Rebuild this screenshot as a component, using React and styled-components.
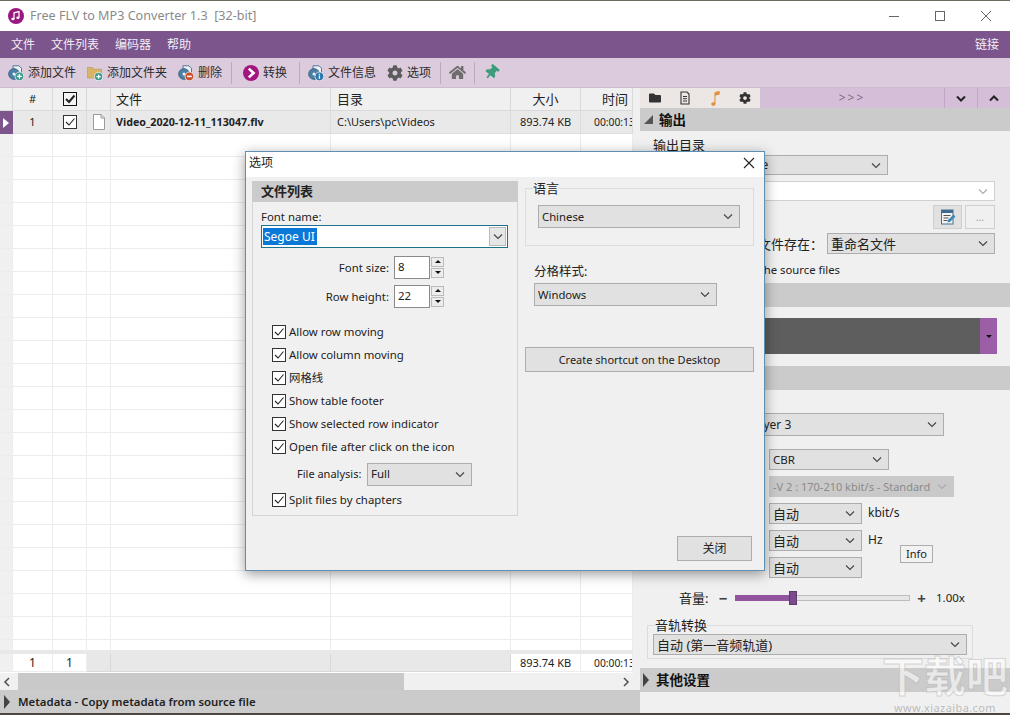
import React from 'react';
import styled, { createGlobalStyle } from 'styled-components';
import { FaCog, FaFolder, FaHome, FaThumbtack } from 'react-icons/fa';
import { IoMusicalNote } from 'react-icons/io5';

const FONT = '"Noto Sans", "Noto Sans CJK SC", sans-serif';
const COLS = '13px 40px 34px 24px 220px 180px 70px 52px';

const Global = createGlobalStyle`
  html, body { margin: 0; padding: 0; background: #fff; }
  #root { width: 1010px; height: 715px; overflow: hidden; }
  * { box-sizing: border-box; }
`;

const Win = styled.div`
  position: relative; width: 1010px; height: 715px; overflow: hidden;
  display: flex; flex-direction: column; background: #f0f0f0;
  font: 12px/16px ${FONT}; color: #222;
  border-top: 1px solid #6e6a5e; border-bottom: 2px solid #4c463e;
`;
const TitleBar = styled.div`
  height: 30px; flex: none; background: #fff; display: flex; align-items: center; padding: 0 1px 0 8px;
`;
const Logo = styled.svg`width: 16px; height: 16px; flex: none;`;
const TitleText = styled.div`margin-left: 6px; font-size: 12.6px; color: #8a8a8a; flex: 1;`;
const WinBtn = styled.svg`width: 46px; height: 12px; flex: none; stroke: #666; fill: none; stroke-width: 1;`;
const Menu = styled.div`
  height: 27px; flex: none; background: #7b558c; color: #f2edf4; display: flex; align-items: center; padding: 0 11px; gap: 16px;
`;
const MenuEnd = styled.span`margin-left: auto;`;
const Toolbar = styled.div`
  height: 30px; flex: none; background: #dccbdc; display: flex; align-items: center; padding-left: 8px;
  border-bottom: 1px solid #cdbccd;
`;
const Tool = styled.div`display: flex; align-items: center; gap: 4px; margin-left: ${p => p.$ml || 0}px; color: #2b2b2b;`;
const IconBox = styled.svg`width: 16px; height: 16px; flex: none;`;
const Sep = styled.div`width: 1px; height: 22px; background: #bcaabc; margin-left: ${p => p.$ml}px;`;
const GearTool = styled(FaCog)`width: 16px; height: 16px; color: #5c5c5c;`;
const HomeTool = styled(FaHome)`width: 17px; height: 17px; color: #6d6d6d; margin-left: 8px;`;
const PinTool = styled(FaThumbtack)`width: 15px; height: 15px; color: #3d9c7b; margin-left: 9px; transform: rotate(40deg);`;

const Main = styled.div`flex: 1; min-height: 0; display: flex;`;
const Left = styled.div`width: 640px; flex: none; display: flex; flex-direction: column; padding-right: 2px;`;
const Table = styled.div`flex: 1; min-height: 0; display: flex; flex-direction: column; padding-right: 5px; background: #f0f0f0;`;
const Row = styled.div`display: grid; grid-template-columns: ${COLS}; flex: none; height: ${p => p.$h}px;`;
const HeadRow = styled(Row)`margin-right: -5px; background: #f0f0f0;`;
const HCell = styled.div`
  background: #f0f0f0; border-right: 1px solid #d9d9d9; border-bottom: 1px solid #d9d9d9;
  display: flex; align-items: center; justify-content: ${p => p.$j || 'center'};
  padding-left: ${p => p.$pl || 0}px; padding-right: ${p => p.$pr || 0}px; font-size: ${p => p.$fs || 13}px;
`;
const Cell = styled.div`
  background: ${p => p.$bg || '#fff'}; border-right: 1px solid ${p => p.$line || '#ececec'}; border-bottom: 1px solid ${p => p.$line || '#ececec'};
  display: flex; align-items: center; overflow: hidden; white-space: nowrap; justify-content: ${p => p.$j || 'flex-start'};
  padding-left: ${p => p.$pl || 0}px; font-weight: ${p => p.$bold ? 700 : 400}; font-size: ${p => p.$fs || 11}px;
`;
const Indicator = styled.div`
  background: #7b558c; display: flex; align-items: center; padding-left: 3px;
`;
const Tri = styled.i`
  display: block; width: 0; height: 0; border-left: 6px solid ${p => p.$c || '#fff'};
  border-top: ${p => p.$s || 5}px solid transparent; border-bottom: ${p => p.$s || 5}px solid transparent;
`;
const Body = styled.div`flex: 1; min-height: 0; overflow: hidden;`;
const FootWrap = styled.div`flex: none; border-top: 4px solid #e8e8e8; border-bottom: 1px solid #fff;`;
const HScroll = styled.div`height: 17px; flex: none; display: flex; align-items: center; background: #f0f0f0; margin-right: 5px; color: #555;`;
const Thumb = styled.div`width: 386px; height: 17px; background: #c9c9c9; margin-left: 3px;`;
const Arrow = styled.svg`width: 15px; height: 10px; flex: none; margin-left: ${p => p.$auto ? 'auto' : '0'}; stroke: #555; fill: none; stroke-width: 1.6;`;
const MetaBar = styled.div`
  height: 23px; flex: none; background: #cbcbcb; margin-right: -2px; display: flex; align-items: center; gap: 8px; padding-left: 4px;
  font-weight: 600; font-size: 11.4px; color: #222;
`;

const Panel = styled.div`flex: 1; min-width: 0; display: flex; flex-direction: column; background: #f0f0f0; position: relative;`;
const Tabs = styled.div`height: 20px; flex: none; display: flex; background: #d5bfd8; align-items: stretch;`;
const TabSet = styled.div`width: 120px; background: #ece7e5; display: flex; align-items: center;`;
const Tab = styled.div`width: 30px; display: flex; align-items: center; justify-content: center; color: ${p => p.$c || '#333'};`;
const More = styled.div`flex: 1; text-align: center; color: #7a6a80; letter-spacing: 2px; font-size: 12px; line-height: 20px;`;
const TabBtn = styled.div`width: 33px; border-left: 1px solid #bfa9c3; display: flex; align-items: center; justify-content: center;`;
const Chevron = styled.svg`width: 10px; height: 7px; flex: none; stroke: ${p => p.$c || '#222'}; stroke-width: ${p => p.$w || 2}; fill: none;`;
const Section = styled.div`
  height: ${p => p.$h || 24}px; flex: none; background: #cbcbcb; display: flex; align-items: center; gap: 6px; padding-left: 4px;
  font-size: 13.5px; font-weight: 700; color: #111;
`;
const Corner = styled.i`display: block; width: 0; height: 0; border-bottom: 9px solid #555; border-left: 9px solid transparent;`;
const OutBody = styled.div`height: 152px; flex: none; padding: 6px 15px 0 13px; font-size: 12px;`;
const OutLabel = styled.div`font-size: 13px; line-height: 17px; height: 18px; color: #222;`;
const Sel = styled.div`
  height: ${p => p.$h || 22}px; width: ${p => p.$w ? p.$w + 'px' : 'auto'}; flex: ${p => p.$w ? 'none' : '1'};
  background: ${p => p.$off ? '#c9c9c9' : '#e1e1e1'}; border: 1px solid ${p => p.$off ? '#c9c9c9' : '#adadad'};
  color: ${p => p.$off ? '#8b8b8b' : '#222'}; display: flex; align-items: center; justify-content: space-between;
  padding: 0 6px 0 ${p => p.$pl || 3}px; white-space: nowrap; overflow: hidden; font-size: ${p => p.$fs || 11.5}px;
`;
const Combo = styled(Sel)`background: #fff; border-color: #d0d0d0; margin-top: 6px;`;
const BtnRow = styled.div`display: flex; justify-content: flex-end; gap: 3px; margin-top: 4px;`;
const IconBtn = styled.div`
  width: ${p => p.$w}px; height: 24px; background: ${p => p.$on ? '#e1e1e1' : '#f0f0f0'}; border: 1px solid #cfcfcf;
  display: flex; align-items: center; justify-content: center; color: #999; font-size: 10px;
`;
const ExistRow = styled.div`display: flex; align-items: center; justify-content: flex-end; gap: 4px; margin-top: 4px; font-size: 13px;`;
const Note = styled.div`width: 187px; text-align: right; margin-top: 8px; white-space: nowrap; font-size: 11.3px;`;
const Bar = styled.div`height: 36px; margin: 11px 13px 12px 0; flex: none; background: #5e5e5e; display: flex; justify-content: flex-end;`;
const BarBtn = styled.div`width: 17px; background: #9c5ea6; display: flex; align-items: center; justify-content: center;`;
const Caret = styled.i`display: block; width: 0; height: 0; border-top: 3px solid #111; border-left: 3px solid transparent; border-right: 3px solid transparent;`;
const Audio = styled.div`flex: 1; min-height: 0; padding: 23px 0 0; display: flex; flex-direction: column;`;
const CodecSel = styled(Sel)`margin-left: 13px;`;
const Stack = styled.div`margin: 13px 0 0 129px; display: flex; flex-direction: column; gap: 6px;`;
const Form = styled.div`
  display: grid; grid-template-columns: 129px 93px 38px auto; column-gap: 0; row-gap: 6px; grid-auto-rows: 21px; margin-top: 6px; justify-content: start;
`;
const FormLabel = styled.div`padding-right: 4px; text-align: right; line-height: 18px;`;
const Unit = styled.div`padding-left: 6px; line-height: 20px;`;
const Info = styled.div`
  grid-column: 4; grid-row: 2 / span 2; align-self: center; margin-top: -1px; width: 33px; height: 18px; background: #f2f2f2; border: 1px solid #adadad;
  display: flex; align-items: center; justify-content: center; font-size: 11px;
`;
const Spacer = styled.div``;
const Volume = styled.div`display: flex; align-items: center; height: 16px; margin: 12px 0 0 39px; font-size: 12px;`;
const VolLabel = styled.span`width: 38px; font-size: 13px;`;
const VolSign = styled.span`width: ${p => p.$w}px; font-size: 15px; font-weight: 700; color: #444; text-align: center;`;
const Track = styled.div`position: relative; width: 175px; height: 6px; background: #e6e6e6; border: 1px solid #bdbdbd; margin-left: 6px;`;
const Fill = styled.div`height: 100%; background: #92549f; margin: -1px 0 0 -1px; box-sizing: content-box; border: 1px solid #92549f;`;
const Knob = styled.div`position: absolute; top: -5px; left: 53px; width: 8px; height: 14px; background: #7d4a8e; border: 1px solid #5c3a6a;`;
const VolValue = styled.span`margin-left: 3px; font-size: 11.5px;`;
const TrackGroup = styled.div`
  margin: 19px 0 0 7px; padding: 8px 5px 0; width: 326px; height: 34px; border: 1px solid #dcdcdc; display: flex; position: relative;
`;
const GroupLegend = styled.span`
  position: absolute; top: -9px; left: ${p => p.$left}px; background: #f0f0f0; font-size: 13px; line-height: 16px; color: #222;
`;
const OtherSection = styled(Section)`margin-top: 9px; padding-left: 3px; gap: 7px;`;
const Watermark = styled.div`
  position: absolute; right: -3px; bottom: -1px; width: 136px; text-align: center; color: rgba(255,255,255,.6); pointer-events: none;
  font-weight: 700; font-size: 42px; line-height: 52px; -webkit-text-stroke: 1px rgba(170,170,170,.45);
`;
const WaterUrl = styled.div`font-size: 11px; line-height: 12px; font-weight: 400; -webkit-text-stroke: 0; color: rgba(150,150,150,.6); letter-spacing: .4px;`;

const Dialog = styled.div`
  position: absolute; left: 245px; top: 150px; width: 520px; height: 420px; background: #f0f0f0; border: 1px solid #5f8fb2;
  box-shadow: 0 3px 12px rgba(0,0,0,.4); display: flex; flex-direction: column; z-index: 5; font-size: 11.4px;
`;
const DlgTitle = styled.div`height: 25px; flex: none; background: #fff; display: flex; align-items: center; justify-content: space-between; padding: 0 9px 4px 3px; font-size: 12px;`;
const DlgX = styled.svg`width: 12px; height: 12px; stroke: #222; stroke-width: 1.1; fill: none;`;
const DlgBody = styled.div`flex: 1; min-height: 0; display: flex; padding: 4px 10px 0 6px; gap: 7px;`;
const ListGroup = styled.div`width: 266px; height: 335px; flex: none; border: 1px solid #d5d5d5; border-top: none;`;
const ListHead = styled.div`height: 21px; background: #cbcbcb; font-weight: 700; font-size: 13px; line-height: 21px; padding-left: 9px; margin: 0 -1px; color: #222;`;
const FontLabel = styled.div`margin: 7px 0 0 8px; line-height: 15px;`;
const FontCombo = styled.div`
  margin: 1px 9px 0 8px; height: 23px; background: #fff; border: 1px solid #1f6f8f; display: flex; align-items: center; justify-content: space-between; padding: 0 1px;
`;
const Picked = styled.span`background: #0a78d7; color: #fff; line-height: 17px; padding: 0 2px 0 1px; font-size: 12px;`;
const DropBtn = styled.div`width: 17px; height: 19px; background: #e6e6e6; border: 1px solid #bbb; display: flex; align-items: center; justify-content: center;`;
const NumRow = styled.div`display: flex; align-items: center; height: 23px; margin-top: ${p => p.$mt}px; justify-content: flex-end; padding-right: 82px; gap: 5px;`;
const NumInput = styled.div`width: 36px; height: 23px; background: #fff; border: 1px solid #8a8a8a; padding-left: 3px; line-height: 19px;`;
const Spin = styled.div`position: relative; width: 0;`;
const SpinBox = styled.div`position: absolute; left: -4px; top: -11px; width: 13px; display: flex; flex-direction: column; gap: 1px;`;
const SpinPart = styled.div`height: 10px; background: #ececec; border: 1px solid #bbb; display: flex; align-items: center; justify-content: center;`;
const SpinTri = styled.i`
  display: block; width: 0; height: 0; border-left: 3px solid transparent; border-right: 3px solid transparent;
  ${p => p.$up ? 'border-bottom: 3px solid #111;' : 'border-top: 3px solid #111;'}
`;
const Checks = styled.div`margin: 12px 0 0 19px; display: flex; flex-direction: column;`;
const CheckRow = styled.div`display: flex; align-items: center; height: 23px; gap: 3px; white-space: nowrap;`;
const Box = styled.svg`width: 14px; height: 14px; flex: none;`;
const AnalysisRow = styled.div`display: flex; align-items: center; height: 22px; margin: 5px 0 3px 25px; gap: 5px;`;
const AnalysisLabel = styled.span`width: 65px; white-space: nowrap; font-size: 11px;`;
const RightCol = styled.div`flex: 1; min-width: 0; position: relative; display: flex; flex-direction: column;`;
const LangGroup = styled.div`
  margin-top: 7px; padding: 16px 12px 0; height: 58px; border: 1px solid #dcdcdc; width: 229px; position: relative;
`;
const SepLabel = styled.div`margin: 18px 0 0 9px; font-size: 12.5px; line-height: 16px;`;
const SepSel = styled(Sel)`margin: 3px 0 0 9px; height: 23px;`;
const WideBtn = styled.div`
  margin-top: 41px; width: 229px; height: 25px; background: #e1e1e1; border: 1px solid #adadad; display: flex; align-items: center; justify-content: center; font-size: 11px;
`;
const CloseBtn = styled.div`
  margin: 164px 2px 0 auto; width: 75px; height: 25px; background: #e1e1e1; border: 1px solid #adadad; display: flex; align-items: center; justify-content: center; font-size: 12px;
`;

const Chev = ({ c = '#444' }) => (
  <Chevron $c={c} $w={1.1} viewBox="0 0 10 7"><path d="M1 1.5 L5 5.5 L9 1.5" /></Chevron>
);
const Check = ({ strong }) => (
  <Box viewBox="0 0 14 14">
    <rect x=".5" y=".5" width="13" height="13" fill={strong ? '#f4f4f4' : '#fff'} stroke={strong ? '#111' : '#333'} />
    <path d="M3 7 L6 10 L11.5 3.5" fill="none" stroke="#222" strokeWidth={strong ? 2 : 1.1} />
  </Box>
);
const DiscIcon = ({ badge }) => (
  <IconBox viewBox="0 0 16 16">
    <path d="M5 .8h6l2.5 2.5V8H5z" fill="#eef2f5" stroke="#3f6b8c" strokeWidth=".9" />
    <circle cx="6" cy="9" r="5.4" fill="#4a7fa6" stroke="#2f5674" strokeWidth=".7" />
    <circle cx="6" cy="9" r="1.5" fill="#eef2f5" />
    {badge === 'add' && <><circle cx="11.4" cy="11.4" r="4.4" fill="#3f9a8e" stroke="#fff" strokeWidth=".7" /><path d="M9 11.4h4.8M11.4 9v4.8" stroke="#fff" strokeWidth="1.3" /></>}
    {badge === 'del' && <><circle cx="11.4" cy="11.4" r="4.4" fill="#c9512f" stroke="#fff" strokeWidth=".7" /><path d="M9 11.4h4.8" stroke="#fff" strokeWidth="1.5" /></>}
    {badge === 'info' && <><circle cx="11.4" cy="11.4" r="4.4" fill="#2f78ae" stroke="#fff" strokeWidth=".7" /><path d="M11.4 10.5v3.2M11.4 8.8v1" stroke="#fff" strokeWidth="1.3" /></>}
  </IconBox>
);
const FolderAdd = () => (
  <IconBox viewBox="0 0 16 16">
    <path d="M0 2.5h5.5L7 4.2h7.5V13H0z" fill="#d9b467" stroke="#b08d45" strokeWidth=".5" />
    <circle cx="11.6" cy="11.6" r="4.1" fill="#3f9a8e" stroke="#fff" strokeWidth=".7" />
    <path d="M9.4 11.6h4.4M11.6 9.4v4.4" stroke="#fff" strokeWidth="1.2" />
  </IconBox>
);
const ConvertIcon = () => (
  <IconBox viewBox="0 0 16 16">
    <circle cx="8" cy="8" r="8" fill="#a3167f" />
    <path d="M5.8 3.6 L10.6 8 L5.8 12.4" fill="none" stroke="#fff" strokeWidth="2.6" />
  </IconBox>
);
const FileGlyph = () => (
  <IconBox viewBox="0 0 16 16">
    <path d="M2.5.5h7.5l3.5 3.5v11.5h-11z" fill="#fff" stroke="#9a9a9a" />
    <path d="M10 .5v3.5h3.5" fill="none" stroke="#9a9a9a" />
  </IconBox>
);
const NoteGlyph = () => (
  <IconBox viewBox="0 0 16 16">
    <path d="M4 2h6l2 2v10H4z" fill="none" stroke="#333" strokeWidth="1.1" />
    <path d="M6 6.5h4M6 8.7h4M6 11h4" stroke="#333" />
  </IconBox>
);
const EditGlyph = () => (
  <IconBox viewBox="0 0 16 16">
    <rect x="1.5" y="1" width="11.5" height="14" fill="#f4f4f4" stroke="#47708f" />
    <rect x="1.5" y="1" width="11.5" height="3" fill="#3d6c93" />
    <path d="M3.5 6.5h7M3.5 9h5M3.5 11.5h4" stroke="#555" />
    <path d="M7.5 13.5 L8 11 L13.5 5.5 L15.5 7.5 L10 13z" fill="#3f87b5" />
  </IconBox>
);

const checks1 = ['Allow row moving', 'Allow column moving', '网格线', 'Show table footer', 'Show selected row indicator', 'Open file after click on the icon'];
const emptyRows = Array.from({ length: 23 }, (_, i) => i);
const colKeys = ['a', 'b', 'c', 'd', 'e', 'f', 'g', 'h'];

export default function App() {
  return (
    <Win>
      <Global />
      <TitleBar>
        <Logo viewBox="0 0 16 16">
          <circle cx="8" cy="8" r="8" fill="#98197f" />
          <path d="M6 11V4.8l5-1.2v6" fill="none" stroke="#fff" strokeWidth="1.2" />
          <ellipse cx="4.9" cy="11" rx="1.6" ry="1.2" fill="#fff" />
          <ellipse cx="9.9" cy="9.8" rx="1.6" ry="1.2" fill="#fff" />
        </Logo>
        <TitleText>Free FLV to MP3 Converter 1.3&nbsp; [32-bit]</TitleText>
        <WinBtn viewBox="0 0 46 12"><path d="M18 6.5h10" /></WinBtn>
        <WinBtn viewBox="0 0 46 12"><rect x="18.5" y="1.5" width="9" height="9" /></WinBtn>
        <WinBtn viewBox="0 0 46 12"><path d="M18 1 L28 11 M28 1 L18 11" /></WinBtn>
      </TitleBar>
      <Menu>
        <span>文件</span><span>文件列表</span><span>编码器</span><span>帮助</span>
        <MenuEnd>链接</MenuEnd>
      </Menu>
      <Toolbar>
        <Tool><DiscIcon badge="add" />添加文件</Tool>
        <Tool $ml={11}><FolderAdd />添加文件夹</Tool>
        <Tool $ml={11}><DiscIcon badge="del" />删除</Tool>
        <Sep $ml={9} />
        <Tool $ml={11}><ConvertIcon />转换</Tool>
        <Sep $ml={12} />
        <Tool $ml={8}><DiscIcon badge="info" />文件信息</Tool>
        <Tool $ml={11}><GearTool />选项</Tool>
        <Sep $ml={9} />
        <HomeTool />
        <Sep $ml={8} />
        <PinTool />
      </Toolbar>
      <Main>
        <Left>
          <Table>
            <HeadRow $h={23}>
              <HCell />
              <HCell $fs={11}>#</HCell>
              <HCell><Check strong /></HCell>
              <HCell />
              <HCell $j="flex-start" $pl={5}>文件</HCell>
              <HCell $j="flex-start" $pl={6}>目录</HCell>
              <HCell>大小</HCell>
              <HCell $j="flex-end" $pr={4}>时间</HCell>
            </HeadRow>
            <Row $h={23}>
              <Indicator><Tri /></Indicator>
              <Cell $bg="#e9e9e9" $line="#dcdcdc" $j="center">1</Cell>
              <Cell $bg="#e9e9e9" $line="#dcdcdc" $j="center"><Check /></Cell>
              <Cell $bg="#e9e9e9" $line="#dcdcdc" $j="center"><FileGlyph /></Cell>
              <Cell $bg="#e9e9e9" $line="#dcdcdc" $pl={5} $bold $fs={10.7}>Video_2020-12-11_113047.flv</Cell>
              <Cell $bg="#e9e9e9" $line="#dcdcdc" $pl={6}>C:\Users\pc\Videos</Cell>
              <Cell $bg="#e9e9e9" $line="#dcdcdc" $j="center">893.74 KB</Cell>
              <Cell $bg="#e9e9e9" $line="#dcdcdc" $pl={13} $fs={10.3}>00:00:13</Cell>
            </Row>
            <Body>
              {emptyRows.map(r => (
                <Row key={r} $h={23}>
                  {colKeys.map((k, i) => <Cell key={k} $bg={i === 0 ? '#f0f0f0' : '#fff'} />)}
                </Row>
              ))}
            </Body>
            <FootWrap>
              <Row $h={18}>
                <Cell $bg="#f0f0f0" />
                <Cell $j="center" $fs={12}>1</Cell>
                <Cell $j="center" $fs={12}>1</Cell>
                <Cell $bg="#e8e8e8" $line="#d9d9d9" />
                <Cell $bg="#e8e8e8" $line="#d9d9d9" />
                <Cell $bg="#e8e8e8" $line="#d9d9d9" />
                <Cell $j="center">893.74 KB</Cell>
                <Cell $pl={13} $fs={10.3}>00:00:13</Cell>
              </Row>
            </FootWrap>
          </Table>
          <HScroll>
            <Arrow viewBox="0 0 15 10"><path d="M9 1 L5 5 L9 9" /></Arrow>
            <Thumb />
            <Arrow $auto viewBox="0 0 15 10"><path d="M6 1 L10 5 L6 9" /></Arrow>
          </HScroll>
          <MetaBar><Tri $c="#444" $s={7} />Metadata - Copy metadata from source file</MetaBar>
        </Left>
        <Panel>
          <Tabs>
            <TabSet>
              <Tab><FaFolder size={12} /></Tab>
              <Tab><NoteGlyph /></Tab>
              <Tab $c="#e0923c"><IoMusicalNote size={17} /></Tab>
              <Tab><FaCog size={12} /></Tab>
            </TabSet>
            <More>&gt;&gt;&gt;</More>
            <TabBtn><Chevron viewBox="0 0 10 7"><path d="M1 1.5 L5 5.5 L9 1.5" /></Chevron></TabBtn>
            <TabBtn><Chevron viewBox="0 0 10 7"><path d="M1 5.5 L5 1.5 L9 5.5" /></Chevron></TabBtn>
          </Tabs>
          <Section $h={23}><Corner />输出</Section>
          <OutBody>
            <OutLabel>输出目录</OutLabel>
            <Sel $w={235} $h={20} $pl={5} $fs={12}>Same as the source<Chev /></Sel>
            <Combo $h={20}><span /><Chev c="#aaa" /></Combo>
            <BtnRow>
              <IconBtn $w={29} $on><EditGlyph /></IconBtn>
              <IconBtn $w={30}>...</IconBtn>
            </BtnRow>
            <ExistRow>如果文件存在：<Sel $w={168} $h={21} $fs={13}>重命名文件<Chev /></Sel></ExistRow>
            <Note>Delete the source files</Note>
          </OutBody>
          <Section />
          <Bar><BarBtn><Caret /></BarBtn></Bar>
          <Section />
          <Audio>
            <CodecSel $w={291} $h={23} $pl={49} $fs={12}>MPEG-1 Layer 3<Chev /></CodecSel>
            <Stack>
              <Sel $w={120} $h={21}>CBR<Chev /></Sel>
              <Sel $w={185} $h={21} $off $fs={11}>-V 2 : 170-210 kbit/s - Standard<Chev c="#aaa" /></Sel>
            </Stack>
            <Form>
              <FormLabel>比特率:</FormLabel>
              <Sel $w={93} $h={21} $fs={13}>自动<Chev /></Sel>
              <Unit>kbit/s</Unit>
              <Spacer />
              <FormLabel>采样率:</FormLabel>
              <Sel $w={93} $h={21} $fs={13}>自动<Chev /></Sel>
              <Unit>Hz</Unit>
              <Info>Info</Info>
              <FormLabel>声道:</FormLabel>
              <Sel $w={93} $h={21} $fs={13}>自动<Chev /></Sel>
            </Form>
            <Volume>
              <VolLabel>音量:</VolLabel>
              <VolSign $w={12}>−</VolSign>
              <Track><Fill style={{ width: '33%' }} /><Knob /></Track>
              <VolSign $w={23}>+</VolSign>
              <VolValue>1.00x</VolValue>
            </Volume>
            <TrackGroup>
              <GroupLegend $left={7}>音轨转换</GroupLegend>
              <Sel $h={21} $fs={13}>自动 (第一音频轨道)<Chev /></Sel>
            </TrackGroup>
            <OtherSection><Tri $c="#444" $s={7} />其他设置</OtherSection>
          </Audio>
          <Watermark>下载吧<WaterUrl>www.xiazaiba.com</WaterUrl></Watermark>
        </Panel>
      </Main>
      <Dialog>
        <DlgTitle>选项<DlgX viewBox="0 0 12 12"><path d="M1 1 L11 11 M11 1 L1 11" /></DlgX></DlgTitle>
        <DlgBody>
          <ListGroup>
            <ListHead>文件列表</ListHead>
            <FontLabel>Font name:</FontLabel>
            <FontCombo><Picked>Segoe UI</Picked><DropBtn><Chev /></DropBtn></FontCombo>
            <NumRow $mt={8}>Font size:<NumInput>8</NumInput><Spin><SpinBox><SpinPart><SpinTri $up /></SpinPart><SpinPart><SpinTri /></SpinPart></SpinBox></Spin></NumRow>
            <NumRow $mt={6}>Row height:<NumInput>22</NumInput><Spin><SpinBox><SpinPart><SpinTri $up /></SpinPart><SpinPart><SpinTri /></SpinPart></SpinBox></Spin></NumRow>
            <Checks>
              {checks1.map(t => <CheckRow key={t}><Check />{t}</CheckRow>)}
              <AnalysisRow><AnalysisLabel>File analysis:</AnalysisLabel><Sel $w={105} $h={23}>Full<Chev /></Sel></AnalysisRow>
              <CheckRow><Check />Split files by chapters</CheckRow>
            </Checks>
          </ListGroup>
          <RightCol>
            <LangGroup>
              <GroupLegend $left={7}>语言</GroupLegend>
              <Sel $w={202} $h={23} $fs={11.3}>Chinese<Chev /></Sel>
            </LangGroup>
            <SepLabel>分格样式:</SepLabel>
            <SepSel $w={183} $fs={11.3}>Windows<Chev /></SepSel>
            <WideBtn>Create shortcut on the Desktop</WideBtn>
            <CloseBtn>关闭</CloseBtn>
          </RightCol>
        </DlgBody>
      </Dialog>
    </Win>
  );
}
